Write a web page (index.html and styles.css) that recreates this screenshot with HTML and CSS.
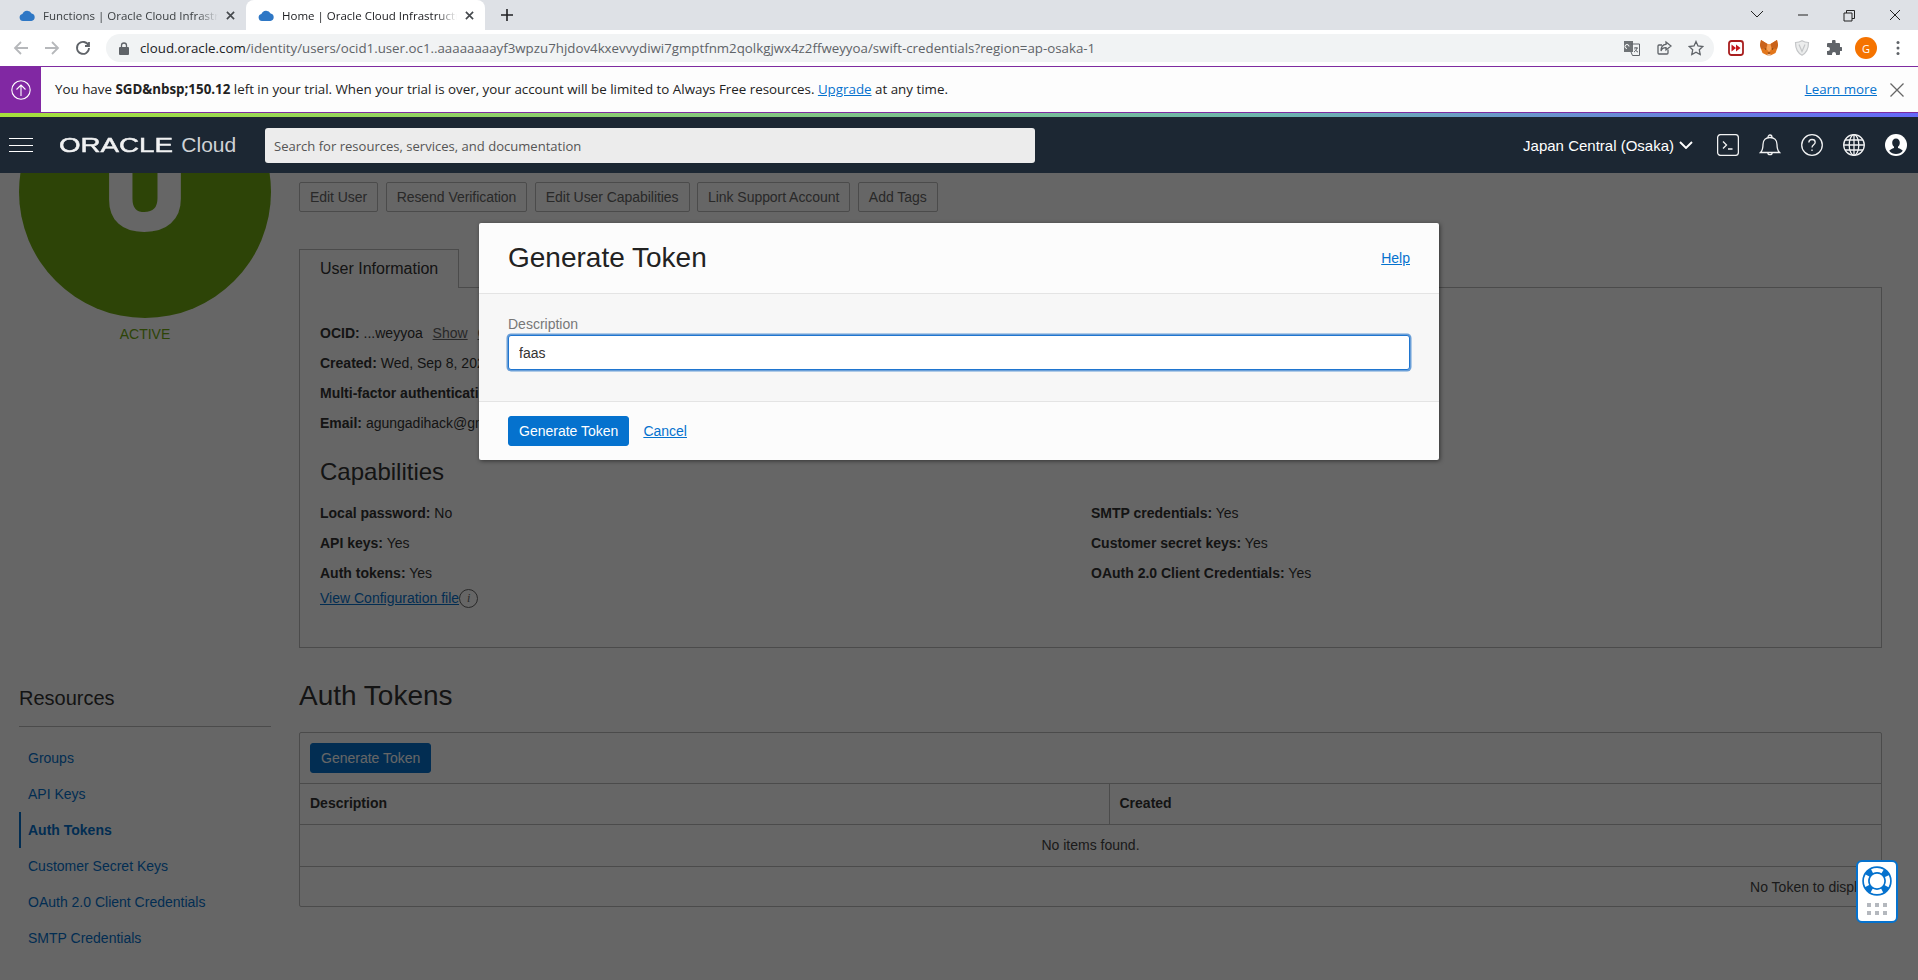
FILE: index.html
```html
<!DOCTYPE html>
<html lang="en">
<head>
    <meta charset="UTF-8">
    <meta name="viewport" content="width=device-width, initial-scale=1.0">
    <title>Home | Oracle Cloud Infrastructure</title>
    <link rel="stylesheet" href="styles.css">
</head>
<body>
    <!-- browser chrome -->
    <div class="tab-strip">
        <div class="tab">
            <svg class="favicon" viewBox="0 0 16 12"><path d="M4 12a3.6 3.6 0 0 1-.6-7.1A5 5 0 0 1 12.6 4.500A3.800 3.800 0 0 1 12.400 12z"/></svg>
            <span class="tab-title">Functions | Oracle Cloud Infrastructure</span>
            <svg class="tab-close" viewBox="0 0 10 10"><path d="M1 1l8 8M9 1l-8 8"/></svg>
        </div>
        <div class="tab tab-active">
            <svg class="favicon" viewBox="0 0 16 12"><path d="M4 12a3.6 3.6 0 0 1-.6-7.1A5 5 0 0 1 12.6 4.500A3.800 3.800 0 0 1 12.400 12z"/></svg>
            <span class="tab-title">Home | Oracle Cloud Infrastructure</span>
            <svg class="tab-close" viewBox="0 0 10 10"><path d="M1 1l8 8M9 1l-8 8"/></svg>
        </div>
        <svg class="new-tab" viewBox="0 0 12 12"><path d="M6 0v12M0 6h12"/></svg>
        <div class="window-controls">
            <svg viewBox="0 0 46 30"><path d="M17 11l6 6 6-6"/></svg>
            <svg viewBox="0 0 46 30"><path d="M18 15h10"/></svg>
            <svg viewBox="0 0 46 30"><path d="M18 13h8v8h-8zM20.500 13v-2.500h8v8h-2.500"/></svg>
            <svg viewBox="0 0 46 30"><path d="M18 10l10 10M28 10l-10 10"/></svg>
        </div>
    </div>

    <div class="toolbar">
        <svg class="nav-icon nav-off" viewBox="0 0 16 16"><path d="M15 8H2M8 2L2 8l6 6"/></svg>
        <svg class="nav-icon nav-off" viewBox="0 0 16 16"><path d="M1 8h13M8 2l6 6-6 6"/></svg>
        <svg class="nav-icon" viewBox="0 0 16 16"><path d="M13.500 5.500A6 6 0 1 0 14 8M14 2v4h-4"/></svg>
        <div class="omnibox">
            <svg class="lock" viewBox="0 0 10 13"><path class="fill" d="M1 5h8a1 1 0 0 1 1 1v6a1 1 0 0 1-1 1H1a1 1 0 0 1-1-1V6a1 1 0 0 1 1-1z"/><path d="M2.500 5V3.500a2.500 2.500 0 0 1 5 0V5"/></svg>
            <span class="url"><b>cloud.oracle.com</b>/identity/users/ocid1.user.oc1..aaaaaaaayf3wpzu7hjdov4kxevvydiwi7gmptfnm2qolkgjwx4z2ffweyyoa/swift-credentials?region=ap-osaka-1</span>
            <div class="omni-actions">
                <svg viewBox="0 0 16 16"><path class="fill" d="M0 1h9v11H0z"/><path class="thin" d="M7 4h8.500v11.500H8.500L7 12"/><path class="thin light" d="M3 8.500a2 2 0 1 1 2-2"/><path class="thin" d="M10 8h4M12 7v1M13 8c-.5 2-1.500 3-3 4M11 9.500c.6 1 1.500 2 3 2.500"/></svg>
                <svg viewBox="0 0 16 16"><path d="M12 9.500V13a1 1 0 0 1-1 1H3a1 1 0 0 1-1-1V6a1 1 0 0 1 1-1h3"/><path d="M10 2l5 4-5 4V7.600C7 7.600 5.500 8.800 5 11c0-4 2-6.400 5-6.600z"/></svg>
                <svg viewBox="0 0 16 16"><path d="M8 1.500l2 4.400 4.800.6-3.500 3.300.9 4.800L8 12.200l-4.200 2.400.9-4.800-3.500-3.300 4.800-.6z"/></svg>
            </div>
        </div>
        <div class="extensions">
            <svg class="ext" viewBox="0 0 16 16"><rect x="1" y="1" width="14" height="14" rx="2.500" fill="#fff" stroke="#a81e1e" stroke-width="1.800"/><path fill="#c4161c" d="M3.500 4.500L8 8l-4.500 3.500zM8 4.500L12.500 8 8 11.500z"/></svg>
            <svg class="ext ext-fox" viewBox="0 0 18 16"><path fill="#e2761b" d="M1 0l6.500 4h3L17 0l1 5-1 4-1.500 4-4 2L9 16l-2.500-1-4-2L1 9 0 5z"/><path fill="#c9621a" d="M1 0l6.500 4L6 8 1 9 0 5zM17 0l-6.500 4L12 8l5 1 1-4z"/><path fill="#f6a35a" d="M7.500 4h3l1 5L9 12 6.500 9z"/><path fill="#763d16" d="M4.500 8l2 .8-1.200 1.200zM13.500 8l-2 .8 1.200 1.200zM7.500 12.500h3L9 14z"/><path fill="#e9d3c2" d="M6.500 15L9 14l2.500 1L9 16z"/></svg>
            <svg class="ext" viewBox="0 0 16 16"><path fill="#eceded" stroke="#c4c6c8" stroke-width="1.200" d="M8 .8c2 1.200 4.300 1.700 6.500 1.700 0 5.500-1.800 10.300-6.500 12.700C3.300 12.800 1.500 8 1.500 2.500 3.700 2.500 6 2 8 .8z"/><path fill="none" stroke="#c4c6c8" stroke-width="1.200" d="M5 4.500l3 7 3-7"/></svg>
            <svg class="ext" viewBox="0 0 16 16"><path fill="#5f6368" d="M6 1.500a1.800 1.800 0 0 1 3.600 0V3H13a1 1 0 0 1 1 1v3h1a2 2 0 0 1 0 4h-1v3a1 1 0 0 1-1 1h-3v-1a2 2 0 0 0-4 0v1H2a1 1 0 0 1-1-1v-3h1a2 2 0 0 0 0-4H1V4a1 1 0 0 1 1-1h4z"/></svg>
            <span class="profile">G</span>
            <svg class="ext" viewBox="0 0 16 16"><circle cx="8" cy="2.500" r="1.500" fill="#5f6368"/><circle cx="8" cy="8" r="1.500" fill="#5f6368"/><circle cx="8" cy="13.500" r="1.500" fill="#5f6368"/></svg>
        </div>
    </div>

    <!-- trial banner -->
    <div class="trial-banner">
        <div class="trial-badge">
            <svg viewBox="0 0 20 20"><circle cx="10" cy="10" r="9.200"/><path d="M10 16V5M5.500 9.500L10 5l4.500 4.500"/></svg>
        </div>
        <p class="trial-text">You have <b>SGD&amp;nbsp;150.12</b> left in your trial. When your trial is over, your account will be limited to Always Free resources. <a href="#">Upgrade</a> at any time.</p>
        <a class="learn-more" href="#">Learn more</a>
        <svg class="trial-close" viewBox="0 0 14 14"><path d="M0.500 0.500l13 13M13.500 0.500l-13 13"/></svg>
    </div>
    <div class="rainbow"></div>

    <!-- console header -->
    <header class="console-header">
        <div class="hamburger"><span></span><span></span><span></span></div>
        <div class="brand"><span class="brand-oracle">ORACLE</span><span class="brand-cloud">Cloud</span></div>
        <div class="search">Search for resources, services, and documentation</div>
        <div class="region">Japan Central (Osaka)
            <svg viewBox="0 0 14 8"><path d="M1 1l6 6 6-6"/></svg>
        </div>
        <div class="header-icons">
            <svg viewBox="0 0 22 22"><rect x=".6" y=".6" width="20.800" height="20.800" rx="3"/><path d="M6 7.500l3.500 3.500L6 14.500M11 15h4.500"/></svg>
            <svg viewBox="0 0 22 22"><path d="M1.500 18.500c2-2 2.500-3.500 2.500-8 0-4.500 3-7 7-7s7 2.500 7 7c0 4.500.5 6 2.500 8zM9 3.500C9 2 10 1 11 1s2 1 2 2.500M8.800 18.500a2.200 2.200 0 0 0 4.400 0"/></svg>
            <svg viewBox="0 0 22 22"><circle cx="11" cy="11" r="10.300"/><path d="M7.800 8.500A3.200 3.200 0 0 1 11 5.500c1.900 0 3.200 1.200 3.200 2.800 0 2.400-3.200 2.600-3.200 5.200M11 15.500v1.600"/></svg>
            <svg viewBox="0 0 22 22"><circle cx="11" cy="11" r="10.300"/><ellipse cx="11" cy="11" rx="4.800" ry="10.300"/><path d="M11 .7v20.600M.7 11h20.600M2 6h18M2 16h18"/></svg>
            <svg class="user-icon" viewBox="0 0 22 22"><circle cx="11" cy="11" r="11" fill="#fff"/><path fill="#1c2733" d="M11 4.500c2.300 0 3.800 1.800 3.800 4.200 0 1.800-.8 3.300-1.800 4v1.300c2 .6 3.900 1.500 4.800 2.800A9 9 0 0 1 11 20a9 9 0 0 1-6.800-3.200c.9-1.300 2.800-2.200 4.800-2.800v-1.300c-1-.7-1.800-2.200-1.800-4 0-2.400 1.500-4.200 3.800-4.200z"/></svg>
        </div>
    </header>

    <main class="console-main">
        <div class="page">
            <aside class="sidebar">
                <div class="avatar">U</div>
                <div class="status">ACTIVE</div>
                <h3 class="resources-title">Resources</h3>
                <ul class="resources">
                    <li><a href="#">Groups</a></li>
                    <li><a href="#">API Keys</a></li>
                    <li class="current"><a href="#">Auth Tokens</a></li>
                    <li><a href="#">Customer Secret Keys</a></li>
                    <li><a href="#">OAuth 2.0 Client Credentials</a></li>
                    <li><a href="#">SMTP Credentials</a></li>
                </ul>
            </aside>
            <section class="detail">
                <div class="actions">
                    <button>Edit User</button>
                    <button>Resend Verification</button>
                    <button>Edit User Capabilities</button>
                    <button>Link Support Account</button>
                    <button>Add Tags</button>
                </div>
                <div class="info-tab">User Information</div>
                <div class="info-panel">
                    <p class="row"><b>OCID:</b> ...weyyoa <a class="muted" href="#">Show</a> <a class="muted" href="#">Copy</a></p>
                    <p class="row"><b>Created:</b> Wed, Sep 8, 2021, 07:12:45 UTC</p>
                    <p class="row"><b>Multi-factor authentication:</b> Disabled</p>
                    <p class="row"><b>Email:</b> agungadihack@gmail.com</p>
                    <h2 class="capabilities">Capabilities</h2>
                    <div class="cap-grid">
                        <div>
                            <p class="row"><b>Local password:</b> No</p>
                            <p class="row"><b>API keys:</b> Yes</p>
                            <p class="row"><b>Auth tokens:</b> Yes</p>
                            <p class="config-link"><a href="#">View Configuration file</a><span class="info-i">i</span></p>
                        </div>
                        <div>
                            <p class="row"><b>SMTP credentials:</b> Yes</p>
                            <p class="row"><b>Customer secret keys:</b> Yes</p>
                            <p class="row"><b>OAuth 2.0 Client Credentials:</b> Yes</p>
                        </div>
                    </div>
                </div>
                <h2 class="section-title">Auth Tokens</h2>
                <div class="token-box">
                    <div class="token-toolbar"><button class="primary">Generate Token</button></div>
                    <table class="token-table">
                        <thead><tr><th class="col-desc">Description</th><th>Created</th></tr></thead>
                        <tbody><tr><td colspan="2">No items found.</td></tr></tbody>
                    </table>
                    <div class="token-footer">No Token to display</div>
                </div>
            </section>
        </div>

        <div class="overlay"></div>

        <div class="modal">
            <div class="modal-head">
                <h2>Generate Token</h2>
                <a href="#">Help</a>
            </div>
            <div class="modal-body">
                <label for="token-desc">Description</label>
                <input id="token-desc" type="text" value="faas">
            </div>
            <div class="modal-foot">
                <button class="primary">Generate Token</button>
                <a href="#">Cancel</a>
            </div>
        </div>

        <div class="help-widget">
            <svg viewBox="0 0 30 30"><circle cx="15" cy="15" r="11" fill="none" stroke="#0572ce" stroke-width="7.500"/><circle cx="15" cy="15" r="11" fill="none" stroke="#fff" stroke-width="4.200" stroke-dasharray="11 6.280" stroke-dashoffset="5.500"/></svg>
            <div class="widget-dots"><i></i><i></i><i></i><i></i><i></i><i></i></div>
        </div>
    </main>
</body>
</html>
```

FILE: styles.css
```css
* {
    box-sizing: border-box;
}
html, body {
    margin: 0;
    height: 980px;
    overflow: hidden;
}
body {
    font-family: "Liberation Sans", Arial, sans-serif;
    font-size: 14px;
    color: #333;
    background: #fff;
}
p, h2, h3, ul {
    margin: 0;
    padding: 0;
    font-weight: normal;
}
svg {
    display: block;
    fill: none;
}

/* browser chrome */
.tab-strip {
    height: 30px;
    background: #dee1e6;
    display: flex;
    align-items: center;
    font-family: "Open Sans", sans-serif;
    font-size: 11.500px;
    color: #3c4043;
}
.tab {
    width: 239px;
    height: 30px;
    padding: 0 11px 0 19px;
    display: flex;
    align-items: center;
    flex: none;
}
.tab:first-child {
    width: 246px;
}
.tab-active {
    background: #fff;
    border-radius: 8px 8px 0 0;
    padding-left: 12px;
    color: #202124;
}
.favicon {
    width: 16px;
    height: 12px;
    fill: #2e77c5;
    flex: none;
}
.tab-title {
    margin-left: 8px;
    flex: 1;
    white-space: nowrap;
    overflow: hidden;
    -webkit-mask-image: linear-gradient(90deg, #000 88%, transparent);
    mask-image: linear-gradient(90deg, #000 88%, transparent);
}
.tab-close {
    width: 9px;
    height: 9px;
    margin-left: 8px;
    stroke: #45494d;
    stroke-width: 1.800;
    flex: none;
}
.new-tab {
    width: 12px;
    height: 12px;
    margin-left: 16px;
    stroke: #202124;
    stroke-width: 1.600;
}
.window-controls {
    margin-left: auto;
    display: flex;
}
.window-controls svg {
    width: 46px;
    height: 30px;
    stroke: #222;
}
.toolbar {
    height: 36px;
    background: #fff;
    display: flex;
    align-items: center;
    padding-left: 13px;
}
.nav-icon {
    width: 16px;
    height: 16px;
    margin-right: 15px;
    stroke: #5f6368;
    stroke-width: 1.800;
}
.nav-off {
    stroke: #b6b8bb;
}
.omnibox {
    width: 1608px;
    height: 28px;
    background: #f1f3f4;
    border-radius: 14px;
    display: flex;
    align-items: center;
    padding-left: 13px;
    font-family: "Open Sans", sans-serif;
    font-size: 13.300px;
    color: #5f6368;
}
.lock {
    width: 10px;
    height: 13px;
    stroke: #5f6368;
    stroke-width: 1.300;
    flex: none;
}
.lock .fill {
    fill: #5f6368;
    stroke: none;
}
.url {
    margin-left: 11px;
    white-space: nowrap;
}
.url b {
    font-weight: normal;
    color: #202124;
}
.omni-actions {
    margin-left: auto;
    padding-right: 10px;
    display: flex;
    gap: 16px;
}
.omni-actions svg {
    width: 16px;
    height: 16px;
    stroke: #5f6368;
    stroke-width: 1.300;
}
.omni-actions .fill {
    fill: #6f7376;
    stroke: none;
}
.omni-actions .thin {
    stroke-width: 1;
}
.omni-actions .light {
    stroke: #fff;
}
.extensions {
    margin-left: 14px;
    display: flex;
    align-items: center;
    gap: 16px;
}
.ext {
    width: 16px;
    height: 16px;
    flex: none;
}
.ext-fox {
    width: 18px;
}
.profile {
    width: 22px;
    height: 22px;
    margin: 0 -3px;
    border-radius: 50%;
    background: #f57300;
    color: #fff;
    font-family: "Open Sans", sans-serif;
    font-size: 11px;
    display: flex;
    align-items: center;
    justify-content: center;
}

/* trial banner */
.trial-banner {
    height: 47px;
    background: #fdfdfd;
    border-top: 1px solid #7f2ba1;
    border-bottom: 1px solid #7f2ba1;
    display: flex;
    align-items: center;
    font-family: "Open Sans", sans-serif;
    font-size: 13.350px;
    color: #222;
}
.trial-banner a {
    color: #0572ce;
}
.trial-badge {
    width: 41px;
    height: 100%;
    background: #8128a3;
    display: flex;
    align-items: center;
    justify-content: center;
    flex: none;
}
.trial-badge svg {
    width: 20px;
    height: 20px;
    stroke: #fff;
    stroke-width: 1.100;
}
.trial-text {
    margin: 0 0 2px 14px;
}
.learn-more {
    margin: 0 0 2px auto;
}
.trial-close {
    width: 14px;
    height: 14px;
    margin: 0 14px 0 13px;
    stroke: #666;
    stroke-width: 1.300;
}
.rainbow {
    height: 4px;
    background: linear-gradient(90deg, #a6e03c, #6db5ad 66%, #6568f8);
}

/* console header */
.console-header {
    height: 56px;
    background: #1c2733;
    display: flex;
    align-items: center;
    color: #fff;
}
.hamburger {
    width: 24px;
    margin-left: 9px;
    display: flex;
    flex-direction: column;
    gap: 5.500px;
}
.hamburger span {
    height: 1px;
    background: #fff;
}
.brand {
    margin-left: 26px;
    width: 206px;
    display: flex;
    align-items: center;
}
.brand-oracle {
    margin-right: 36px;
    font-size: 21px;
    transform: scaleX(1.320);
    transform-origin: left center;
    -webkit-text-stroke: .5px #f1f2f3;
    color: #f1f2f3;
}
.brand-cloud {
    font-size: 21px;
    color: #cfd2d5;
}
.search {
    width: 770px;
    height: 35px;
    background: #ececec;
    border-radius: 3px;
    padding-left: 9px;
    line-height: 36px;
    font-family: "Open Sans", sans-serif;
    font-size: 13.050px;
    color: #555;
}
.region {
    margin-left: auto;
    display: flex;
    align-items: center;
    gap: 5px;
    font-size: 15px;
}
.region svg {
    width: 14px;
    height: 8px;
    stroke: #fff;
    stroke-width: 1.900;
}
.header-icons {
    margin: 0 11px 0 24px;
    display: flex;
    align-items: center;
    gap: 20px;
}
.header-icons svg {
    width: 22px;
    height: 22px;
    stroke: #f1f2f3;
    stroke-width: 1.300;
}
.header-icons .user-icon {
    stroke: none;
}

/* page under the dialog */
.console-main {
    position: relative;
    height: 807px;
    overflow: hidden;
}
.page {
    display: flex;
    margin-top: -107px;
    padding: 0 36px 0 19px;
}
.sidebar {
    width: 252px;
    flex: none;
}
.avatar {
    width: 252px;
    height: 252px;
    border-radius: 50%;
    background: #70aa12;
    color: #fff;
    font-size: 106px;
    font-weight: bold;
    -webkit-text-stroke: 8px #fff;
    text-align: center;
    line-height: 248px;
}
.status {
    margin-top: 6px;
    line-height: 20px;
    text-align: center;
    color: #70aa12;
}
.resources-title {
    margin-top: 342px;
    padding-bottom: 16px;
    border-bottom: 1px solid #bbb;
    font-size: 20px;
    line-height: 24px;
}
.resources {
    margin-top: 13px;
    list-style: none;
}
.resources li {
    height: 36px;
    line-height: 36px;
    padding-left: 9px;
}
.resources a {
    color: #0572ce;
    text-decoration: none;
}
.resources .current {
    border-left: 2px solid #0572ce;
    padding-left: 7px;
}
.resources .current a {
    font-weight: bold;
}
.detail {
    margin-left: 28px;
    flex: 1;
    padding-top: 116px;
}
.actions {
    display: flex;
    gap: 7.500px;
}
button {
    height: 30px;
    padding: 0 10px;
    font: inherit;
    letter-spacing: -.05px;
    color: #666;
    background: #fff;
    border: 1px solid #bbb;
    border-radius: 2px;
}
button.primary {
    background: #0572ce;
    border-color: #0572ce;
    color: #fff;
    letter-spacing: 0;
    border-radius: 3px;
}
.info-tab {
    width: 160px;
    height: 39px;
    margin-top: 37px;
    padding-left: 20px;
    line-height: 37px;
    font-size: 16px;
    background: #fff;
    border: 1px solid #bbb;
    border-bottom: none;
    position: relative;
    z-index: 1;
}
.info-panel {
    height: 361px;
    margin-top: -1px;
    padding: 30px 20px 0;
    border: 1px solid #bbb;
}
.row {
    height: 30px;
    line-height: 30px;
    white-space: nowrap;
}
.muted {
    margin-left: 6px;
    color: #666;
}
.capabilities {
    margin-top: 19px;
    font-size: 24px;
    line-height: 30px;
}
.cap-grid {
    display: grid;
    grid-template-columns: 771px 1fr;
    margin-top: 11px;
}
.config-link {
    display: flex;
    align-items: center;
    line-height: 20px;
}
.config-link a {
    color: #0572ce;
}
.info-i {
    width: 19px;
    height: 19px;
    border: 1px solid #666;
    border-radius: 50%;
    font: italic 12px "Liberation Serif", serif;
    color: #666;
    text-align: center;
    line-height: 17px;
}
.section-title {
    margin-top: 31px;
    font-size: 28px;
    line-height: 34px;
}
.token-box {
    margin-top: 19px;
    border: 1px solid #bbb;
    border-radius: 2px;
}
.token-toolbar {
    height: 50px;
    padding: 10px 0 0 10px;
}
.token-table {
    width: 100%;
    border-collapse: collapse;
    table-layout: fixed;
}
.token-table th, .token-table td {
    height: 41px;
    padding: 0 10px;
    border-top: 1px solid #bbb;
    text-align: left;
}
.token-table th {
    padding-bottom: 2px;
}
.token-table td {
    text-align: center;
    color: #444;
}
.col-desc {
    width: 809px;
    border-right: 1px solid #bbb;
}
.token-footer {
    height: 40px;
    line-height: 40px;
    padding-right: 9px;
    border-top: 1px solid #bbb;
    text-align: right;
    color: #444;
}

/* dialog */
.overlay {
    position: absolute;
    inset: 0;
    z-index: 5;
    background: rgba(0, 0, 0, .6);
}
.modal {
    position: absolute;
    left: 479px;
    top: 50px;
    z-index: 6;
    width: 960px;
    height: 237px;
    background: #fcfcfc;
    border-radius: 2px;
    box-shadow: 1px 1px 4px rgba(0, 0, 0, .5);
    display: flex;
    flex-direction: column;
}
.modal a {
    color: #0572ce;
}
.modal-head {
    height: 71px;
    padding: 0 29px;
    display: flex;
    align-items: center;
    justify-content: space-between;
    border-bottom: 1px solid #e4e4e4;
}
.modal-head h2 {
    font-size: 28px;
    color: #222;
}
.modal-body {
    height: 108px;
    padding: 21px 29px 0;
    background: #f7f7f7;
    border-bottom: 1px solid #e4e4e4;
}
.modal-body label {
    display: block;
    height: 19px;
    line-height: 18px;
    color: #777;
}
.modal-body input {
    display: block;
    width: 100%;
    height: 35px;
    margin-top: 1px;
    padding: 0 10px;
    font: inherit;
    color: #333;
    background: #fff;
    border: 1px solid #1f75cf;
    box-shadow: 0 0 0 1.500px #6a9fd8;
    border-radius: 3px;
    outline: none;
}
.modal-foot {
    flex: 1;
    padding-left: 29px;
    display: flex;
    align-items: center;
    gap: 14px;
}

/* help widget */
.help-widget {
    position: absolute;
    left: 1856px;
    top: 687px;
    z-index: 6;
    width: 42px;
    height: 63px;
    background: #fff;
    border: 2px solid #0572ce;
    border-radius: 6px;
    padding: 4px 4px 0;
}
.help-widget svg {
    width: 30px;
    height: 30px;
}
.widget-dots {
    display: grid;
    grid-template-columns: repeat(3, 4px);
    gap: 4px;
    justify-content: center;
    margin-top: 7px;
}
.widget-dots i {
    height: 4px;
    background: #b4b8be;
}
```
